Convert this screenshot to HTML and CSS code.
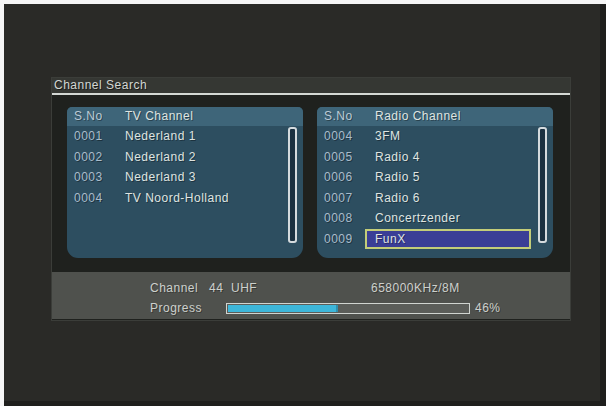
FILE: index.html
```html
<!DOCTYPE html>
<html>
<head>
<meta charset="utf-8">
<link rel="stylesheet" href="styles.css">
</head>
<body>
<div class="screen">
  <div class="dialog">
    <div class="title">Channel Search</div>
    <div class="title-line"></div>
    <div class="panels">
      <div class="panel">
        <div class="row head"><span class="sno">S.No</span><span class="name">TV Channel</span></div>
        <div class="panel-body">
          <div class="list">
            <div class="row"><span class="sno">0001</span><span class="name">Nederland 1</span></div>
            <div class="row"><span class="sno">0002</span><span class="name">Nederland 2</span></div>
            <div class="row"><span class="sno">0003</span><span class="name">Nederland 3</span></div>
            <div class="row"><span class="sno">0004</span><span class="name">TV Noord-Holland</span></div>
          </div>
          <div class="scroll"></div>
        </div>
      </div>
      <div class="panel">
        <div class="row head"><span class="sno">S.No</span><span class="name">Radio Channel</span></div>
        <div class="panel-body">
          <div class="list">
            <div class="row"><span class="sno">0004</span><span class="name">3FM</span></div>
            <div class="row"><span class="sno">0005</span><span class="name">Radio 4</span></div>
            <div class="row"><span class="sno">0006</span><span class="name">Radio 5</span></div>
            <div class="row"><span class="sno">0007</span><span class="name">Radio 6</span></div>
            <div class="row"><span class="sno">0008</span><span class="name">Concertzender</span></div>
            <div class="row sel"><span class="sno">0009</span><span class="name">FunX</span></div>
          </div>
          <div class="scroll"></div>
        </div>
      </div>
    </div>
    <div class="info">
      <div class="info-row">
        <span class="ch-label">Channel</span>
        <span class="ch-val">44&nbsp;&nbsp;UHF</span>
        <span class="freq">658000KHz/8M</span>
      </div>
      <div class="info-row">
        <span class="pg-label">Progress</span>
        <div class="bar"><div class="fill" style="width:46%"></div></div>
        <span class="pct">46%</span>
      </div>
    </div>
  </div>
</div>
</body>
</html>
```

FILE: styles.css
```css
html, body {
  margin: 0;
  padding: 0;
  background: #f6f6f6;
}
body {
  font-family: "Liberation Sans", Arial, sans-serif;
  font-size: 12px;
  letter-spacing: 0.5px;
  color: #dde2df;
}
.screen {
  margin: 4px 0 0 4px;
  width: 596px;
  height: 397px;
  background: #2a2a27;
  border-right: 6px solid #1f1f1d;
  border-bottom: 5px solid #1f1f1d;
  padding: 73px 0 0 47px;
  box-sizing: content-box;
}
.screen {
  width: 549px;
  height: 324px;
}
.dialog {
  width: 520px;
  box-sizing: border-box;
  border: 1px solid #3b3d39;
  background: #1f211e;
  padding-bottom: 1px;
}
.title {
  height: 15px;
  line-height: 15px;
  padding-left: 2px;
  background: #353733;
  color: #d3d6d2;
  text-shadow: 1px 1px 0 rgba(0,0,0,0.5);
}
.title-line {
  height: 2px;
  background: #d4d8d4;
}
.panels {
  display: flex;
  gap: 14px;
  padding: 12px 0 0 15px;
}
.panel {
  width: 236px;
  height: 151px;
  background: #2d4e60;
  border-radius: 5px 5px 11px 11px;
  overflow: hidden;
}
.row {
  display: flex;
  height: 20.5px;
  line-height: 20.5px;
  padding-left: 7px;
  white-space: nowrap;
  text-shadow: 1px 1px 0 rgba(0,0,0,0.35);
}
.row.head {
  height: 19px;
  line-height: 19px;
  background: #3e6579;
}
.sno {
  width: 51px;
  flex: none;
  color: #a9bccb;
}
.head .sno {
  color: #bccbd6;
}
.name {
  color: #dfe4e1;
}
.panel-body {
  display: flex;
}
.list {
  flex: 1;
}
.row.sel .name {
  margin-left: -10px;
  padding-left: 8px;
  width: 166px;
  height: 20px;
  line-height: 16px;
  box-sizing: border-box;
  border: 2px solid #c3cd79;
  background: #3a3e96;
}
.scroll {
  width: 9px;
  height: 116px;
  margin: 1px 6px 0 0;
  box-sizing: border-box;
  border: 2px solid #d5dbde;
  border-radius: 3px;
  background: #1b3141;
}
.info {
  margin-top: 14px;
  height: 47px;
  background: #4f514d;
  padding: 9px 0 0 98px;
  box-sizing: border-box;
  color: #cdd0cc;
}
.info-row {
  display: flex;
  align-items: center;
  height: 14px;
  line-height: 14px;
  text-shadow: 1px 1px 0 rgba(0,0,0,0.3);
}
.info-row + .info-row {
  margin-top: 6px;
}
.ch-label {
  width: 59px;
}
.ch-val {
  width: 162px;
}
.pg-label {
  width: 76px;
}
.bar {
  width: 244px;
  height: 11px;
  box-sizing: border-box;
  border: 1px solid #d0d4d0;
  background: #5b5d59;
  padding: 1px;
}
.fill {
  height: 100%;
  background: #3db6d9;
  box-shadow: inset -2px 0 0 #2f8fad;
}
.pct {
  margin-left: 5px;
}
```
